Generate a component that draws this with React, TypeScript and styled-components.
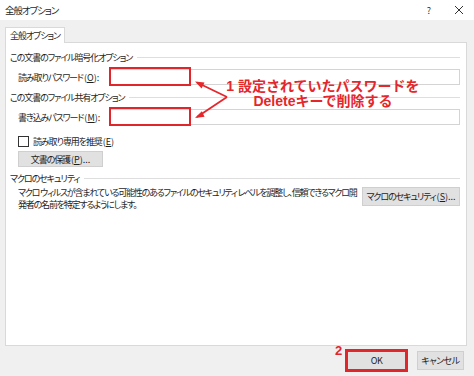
import React from 'react';
import styled, { createGlobalStyle } from 'styled-components';

const GlobalStyle = createGlobalStyle`
  html, body {
    margin: 0;
    padding: 0;
  }
  body {
    background: #f0f0f0;
    font-family: "Noto Sans CJK JP", "Noto Sans", sans-serif;
    font-feature-settings: "palt";
    color: #1e1e1e;
  }
`;

const App = () => {
  return (
    <Window>
      <GlobalStyle />
      <TitleBar>
        <Title>全般オプション</Title>
        <TitleButtons>
          <Help>?</Help>
          <svg width="10" height="10" viewBox="0 0 10 10">
            <path d="M1 1 L9 9 M9 1 L1 9" stroke="#333" strokeWidth="1" />
          </svg>
        </TitleButtons>
      </TitleBar>

      <Body>
        <Tab>全般オプション</Tab>
        <Panel>
          <Section>この文書のファイル暗号化オプション</Section>
          <FieldRow $top={6}>
            <FieldLabel>
              読み取りパスワード<Key>(<u>O</u>):</Key>
            </FieldLabel>
            <InputWrap>
              <Input />
              <Highlight />
            </InputWrap>
          </FieldRow>

          <Section $top={6}>この文書のファイル共有オプション</Section>
          <FieldRow $top={6}>
            <FieldLabel>
              書き込みパスワード<Key>(<u>M</u>):</Key>
            </FieldLabel>
            <InputWrap>
              <Input />
              <Highlight />
            </InputWrap>
          </FieldRow>

          <CheckRow>
            <CheckBox />
            <span>
              読み取り専用を推奨<Key>(<u>E</u>)</Key>
            </span>
          </CheckRow>
          <ProtectButton>
            文書の保護<Key>(<u>P</u>)...</Key>
          </ProtectButton>

          <Section $top={5}>マクロのセキュリティ</Section>
          <MacroRow>
            <MacroText>
              マクロ ウィルスが含まれている可能性のあるファイルのセキュリティ レベルを調整し、信頼できるマクロ開
              <br />
              発者の名前を特定するようにします。
            </MacroText>
            <MacroButton>
              マクロのセキュリティ<Key>(<u>S</u>)...</Key>
            </MacroButton>
          </MacroRow>
        </Panel>
      </Body>

      <Footer>
        <OkWrap>
          <StepNumber>2</StepNumber>
          <DialogButton $primary>OK</DialogButton>
        </OkWrap>
        <DialogButton $width={47}>キャンセル</DialogButton>
      </Footer>

      <Arrows width="50" height="50" viewBox="0 0 50 50">
        <path d="M42 22 L12 7.5 M42 22 L12 42" stroke="#e5262b" strokeWidth="1.8" fill="none" />
        <polygon points="10,6.5 19.5,7.6 16.6,13.4" fill="#e5262b" />
        <polygon points="10,43 16.8,36.2 19.6,41.8" fill="#e5262b" />
      </Arrows>
      <Annotation>
        1 設定されていたパスワードを
        <br />
        Deleteキーで削除する
      </Annotation>
    </Window>
  );
};

export default App;

const Window = styled.div`
  position: relative;
  width: 474px;
  height: 376px;
  overflow: hidden;
  background: #f0f0f0;
  font-size: 9px;
  letter-spacing: -1.1px;
`;

const Key = styled.span`
  letter-spacing: 0;
  margin-left: 1px;
`;

const TitleBar = styled.div`
  height: 20px;
  background: #fff;
  display: flex;
  align-items: center;
  justify-content: space-between;
  padding: 0 10px 0 5px;
`;

const Title = styled.div`
  font-size: 9.5px;
`;

const TitleButtons = styled.div`
  display: flex;
  align-items: center;
  gap: 24px;
`;

const Help = styled.span`
  font-size: 9px;
  color: #333;
`;

const Body = styled.div`
  padding: 7px 7px 0 5px;
`;

const Tab = styled.div`
  width: 60px;
  height: 16px;
  box-sizing: border-box;
  background: #fff;
  border: 1px solid #d9d9d9;
  border-bottom: none;
  display: flex;
  align-items: center;
  justify-content: center;
  white-space: nowrap;
  margin-bottom: -1px;
  position: relative;
  z-index: 1;
`;

const Panel = styled.div`
  height: 304px;
  box-sizing: border-box;
  background: #fff;
  border: 1px solid #d9d9d9;
  padding: 8px 6px 0 4px;
  display: flex;
  flex-direction: column;
`;

const Section = styled.div<{ $top?: number }>`
  height: 12px;
  margin-top: ${(p) => p.$top ?? 0}px;
  display: flex;
  align-items: center;
  gap: 5px;
  white-space: nowrap;

  &::after {
    content: '';
    flex: 1;
    height: 1px;
    background: #dedede;
  }
`;

const FieldRow = styled.div<{ $top: number }>`
  margin: ${(p) => p.$top}px 0 0 8px;
  height: 16px;
  display: flex;
  align-items: center;
`;

const FieldLabel = styled.div`
  width: 92px;
  white-space: nowrap;
`;

const InputWrap = styled.div`
  position: relative;
  flex: 1;
  height: 16px;
`;

const Input = styled.div`
  height: 100%;
  box-sizing: border-box;
  border: 1px solid #d4d4d4;
  background: #fff;
`;

const Highlight = styled.div`
  position: absolute;
  left: -1px;
  top: -2px;
  width: 82px;
  height: 19px;
  box-sizing: border-box;
  border: 2px solid #e0262b;
`;

const CheckRow = styled.div`
  margin: 10px 0 0 8px;
  height: 12px;
  display: flex;
  align-items: center;
  gap: 4px;
`;

const CheckBox = styled.div`
  width: 11px;
  height: 11px;
  box-sizing: border-box;
  border: 1px solid #333;
  background: #fff;
`;

const Button = styled.div`
  box-sizing: border-box;
  background: #e1e1e1;
  border: 1px solid #cfcfcf;
  display: flex;
  align-items: center;
  justify-content: center;
  white-space: nowrap;
`;

const ProtectButton = styled(Button)`
  margin: 4px 0 0 8px;
  width: 85px;
  height: 16px;
`;

const MacroRow = styled.div`
  margin: 3px 0 0 8px;
  display: flex;
  justify-content: space-between;
  align-items: flex-start;
`;

const MacroText = styled.div`
  white-space: nowrap;
  line-height: 11.5px;
  letter-spacing: -1.2px;
`;

const MacroButton = styled(Button)`
  width: 98px;
  height: 19px;
`;

const Footer = styled.div`
  height: 29px;
  display: flex;
  justify-content: flex-end;
  align-items: flex-start;
  gap: 11px;
  padding: 5px 10px 0 0;
  box-sizing: border-box;
`;

const OkWrap = styled.div`
  position: relative;
`;

const StepNumber = styled.div`
  position: absolute;
  left: -12px;
  top: -8px;
  font-family: "Liberation Sans", Arial, sans-serif;
  font-weight: 700;
  font-size: 13px;
  letter-spacing: 0;
  color: #e0262b;
`;

const DialogButton = styled(Button)<{ $primary?: boolean; $width?: number }>`
  width: ${(p) => p.$width ?? 59}px;
  height: 19px;
  letter-spacing: -0.5px;
  border-color: ${(p) => (p.$primary ? '#0078d7' : '#cfcfcf')};
  outline: ${(p) => (p.$primary ? '2px solid #e0262b' : 'none')};
  outline-offset: 0;
`;

const Arrows = styled.svg`
  position: absolute;
  left: 185px;
  top: 75px;
`;

const Annotation = styled.div`
  position: absolute;
  left: 218px;
  top: 79px;
  width: 210px;
  text-align: center;
  font-family: "Liberation Sans", "Noto Sans CJK JP", sans-serif;
  font-feature-settings: normal;
  font-weight: 700;
  font-size: 14px;
  line-height: 15px;
  letter-spacing: 0;
  color: #e5262b;
`;
